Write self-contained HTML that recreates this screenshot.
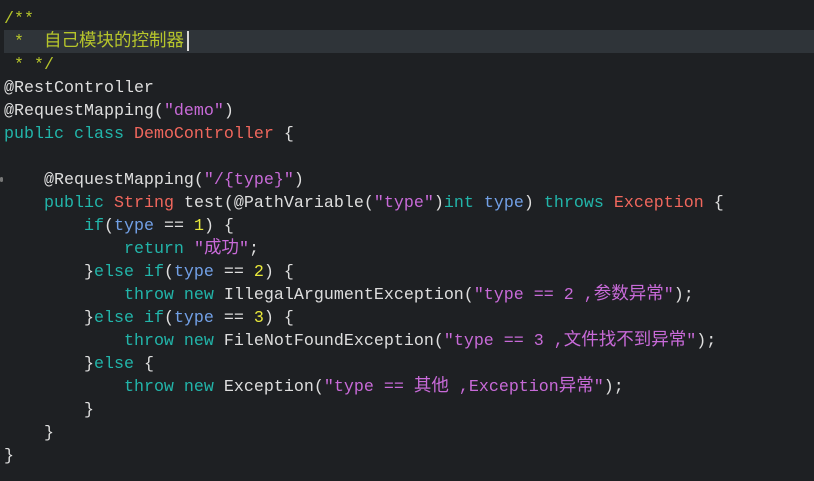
<!DOCTYPE html>
<html><head><meta charset="utf-8"><style>
body{margin:0;background:#1e2023;width:814px;height:481px;overflow:hidden;position:relative}
.code{position:absolute;left:4px;top:8px;font-family:"Liberation Mono","Noto Sans CJK SC",monospace;font-size:16.67px;line-height:23px;color:#dedede;z-index:2;white-space:pre}
.code div{height:23px}
.z{font-family:"Noto Sans CJK SC",sans-serif;font-size:17.5px;line-height:0}
.hl{position:absolute;left:4px;right:0;top:30px;height:23px;background:#2f3439;z-index:1}
.cur{position:absolute;left:187px;top:31px;width:2px;height:20px;background:#d8d8d8;z-index:3}
.dot{position:absolute;left:0;top:177px;width:3px;height:5px;background:#777;border-radius:2px}
.c{color:#b6c52b}.k{color:#22b5aa}.t{color:#f0675d}.s{color:#c86ad8}.n{color:#e8e83a}.v{color:#72a0e6}
</style></head><body>
<div class="hl"></div><div class="cur"></div><div class="dot"></div>
<div class="code"><div class="c">/**</div><div class="c"> *  <span class="z">自己模块的控制器</span></div><div class="c"> * */</div><div>@RestController</div><div>@RequestMapping(<span class="s">"demo"</span>)</div><div><span class="k">public class</span> <span class="t">DemoController</span> {</div><div> </div><div>    @RequestMapping(<span class="s">"/{type}"</span>)</div><div>    <span class="k">public</span> <span class="t">String</span> test(@PathVariable(<span class="s">"type"</span>)<span class="k">int</span> <span class="v">type</span>) <span class="k">throws</span> <span class="t">Exception</span> {</div><div>        <span class="k">if</span>(<span class="v">type</span> == <span class="n">1</span>) {</div><div>            <span class="k">return</span> <span class="s">"<span class="z">成功</span>"</span>;</div><div>        }<span class="k">else if</span>(<span class="v">type</span> == <span class="n">2</span>) {</div><div>            <span class="k">throw new</span> IllegalArgumentException(<span class="s">"type == 2 ,<span class="z">参数异常</span>"</span>);</div><div>        }<span class="k">else if</span>(<span class="v">type</span> == <span class="n">3</span>) {</div><div>            <span class="k">throw new</span> FileNotFoundException(<span class="s">"type == 3 ,<span class="z">文件找不到异常</span>"</span>);</div><div>        }<span class="k">else</span> {</div><div>            <span class="k">throw new</span> Exception(<span class="s">"type == <span class="z">其他</span> ,Exception<span class="z">异常</span>"</span>);</div><div>        }</div><div>    }</div><div>}</div></div>
</body></html>
